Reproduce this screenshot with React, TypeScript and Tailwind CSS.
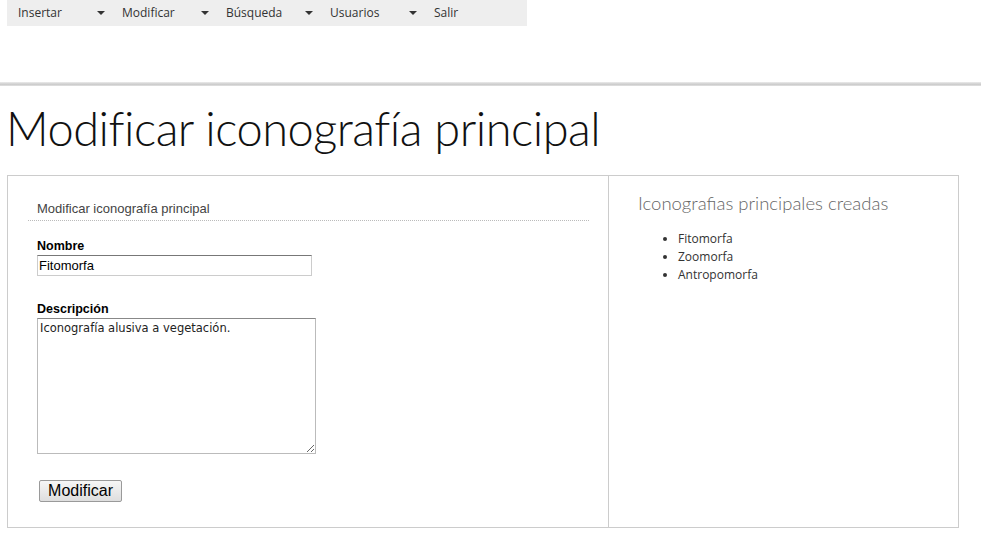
import React from "react";

const menu = ["Insertar", "Modificar", "Búsqueda", "Usuarios", "Salir"];

function Arrow() {
  return (
    <svg width="8" height="4" viewBox="0 0 8 4" className="block">
      <path d="M0 0 L8 0 L4 4 Z" fill="#333" />
    </svg>
  );
}

export default function App() {
  return (
    <div className="min-h-[535px] w-full bg-white">
      <nav className="ml-[7px] flex h-[26px] w-[520px] bg-[#eeeeee] font-['Open_Sans',sans-serif] text-[12px] text-[#333]">
        {menu.map((m, i) => (
          <div key={m} className="flex w-[104px] items-center justify-between pl-[11px] pr-[6px]">
            <span>{m}</span>
            {i < menu.length - 1 && <Arrow />}
          </div>
        ))}
      </nav>
      <div className="mt-[56px] h-[4px] w-full bg-[linear-gradient(#ececec,#d8d8d8,#cccccc,#e4e4e4)]" />
      <h1 className="ml-[6px] mt-[12px] font-['Lato',sans-serif] text-[47px] font-light leading-[60px] tracking-[-0.5px] text-[#111]">
        Modificar iconografía principal
      </h1>
      <div className="ml-[7px] mt-[17px] flex h-[353px] w-[952px] border border-[#cccccc]">
        <div className="w-[601px] border-r border-[#cccccc] pl-[20px] pr-[19px] pt-[23px] font-['Liberation_Sans',sans-serif] text-[12px]">
          <div className="border-b border-dotted border-[#bbbbbb] pb-[1px] pl-[9px] text-[13px] text-[#444]">
            Modificar iconografía principal
          </div>
          <div className="pl-[9px]">
            <div className="mt-[17px] text-[12.5px] font-bold leading-[17px] text-black">Nombre</div>
            <input
              defaultValue="Fitomorfa"
              className="block h-[21px] w-[275px] border border-[#cccccc] border-t-[#777] px-[1px] text-[13px] text-black outline-none"
            />
            <div className="mt-[25px] text-[12.5px] font-bold leading-[17px] text-black">Descripción</div>
            <textarea
              defaultValue="Iconografía alusiva a vegetación."
              className="block h-[136px] w-[279px] resize-y border border-[#bbbbbb] border-t-[#888] px-[2px] py-[1px] font-['DejaVu_Sans',sans-serif] text-[11.5px] text-[#222] outline-none"
            />
            <button className="ml-[2px] mt-[26px] h-[22px] w-[83px] rounded-[2px] border border-[#9a9a9a] bg-[linear-gradient(#f6f6f6,#dedede)] font-['Liberation_Sans',sans-serif] text-[16px] leading-[20px] text-black">
              Modificar
            </button>
          </div>
        </div>
        <div className="flex-1 pl-[29px] pt-[14px]">
          <h2 className="font-['Lato',sans-serif] text-[18.5px] font-light text-[#666]">
            Iconografias principales creadas
          </h2>
          <ul className="ml-[40px] mt-[12px] list-disc font-['Open_Sans',sans-serif] text-[12px] leading-[18px] text-[#333]">
            <li>Fitomorfa</li>
            <li>Zoomorfa</li>
            <li>Antropomorfa</li>
          </ul>
        </div>
      </div>
    </div>
  );
}
